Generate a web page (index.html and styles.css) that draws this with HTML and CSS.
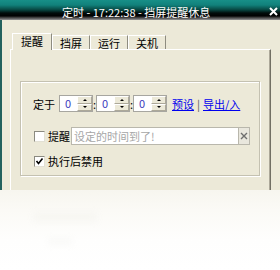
FILE: index.html
```html
<!DOCTYPE html>
<html>
<head>
<meta charset="utf-8">
<link rel="stylesheet" href="styles.css">
</head>
<body>
<div class="win">
  <div class="titlebar">
    <span class="title">定时 - 17:22:38 - 挡屏提醒休息</span>
    <svg class="close" width="9" height="9" viewBox="0 0 9 9"><path d="M1 1L8 8M8 1L1 8" stroke="#fff" stroke-width="2"/></svg>
  </div>
  <div class="frame">
    <div class="tabs">
      <div class="tab sel">提醒</div>
      <div class="tab">挡屏</div>
      <div class="tab">运行</div>
      <div class="tab">关机</div>
    </div>
    <div class="panel">
      <div class="group">
        <div class="row r1">
          <span class="lbl">定于</span>
          <div class="spin"><span class="val">0</span><span class="btns"><span class="half"><i class="up"></i></span><span class="half"><i class="dn"></i></span></span></div>
          <span class="colon">:</span>
          <div class="spin"><span class="val">0</span><span class="btns"><span class="half"><i class="up"></i></span><span class="half"><i class="dn"></i></span></span></div>
          <span class="colon">:</span>
          <div class="spin"><span class="val">0</span><span class="btns"><span class="half"><i class="up"></i></span><span class="half"><i class="dn"></i></span></span></div>
          <a class="link first">预设</a><span class="sep">|</span><a class="link">导出/入</a>
        </div>
        <div class="row r2">
          <span class="cb"></span>
          <span class="lbl cbl">提醒</span>
          <div class="input"><span class="ph">设定的时间到了!</span></div>
          <span class="xbtn"><svg width="8" height="8" viewBox="0 0 8 8"><path d="M1 1L7 7M7 1L1 7" stroke="#6e6e6e" stroke-width="1.4"/></svg></span>
        </div>
        <div class="row r3">
          <span class="cb"><svg width="9" height="9" viewBox="0 0 9 9"><path d="M1.5 4L3.5 6.5L7.5 1.5" fill="none" stroke="#000" stroke-width="1.6"/></svg></span>
          <span class="lbl cbl">执行后禁用</span>
        </div>
      </div>
    </div>
  </div>
  <div class="fade">
    <div class="ghost g1"></div>
    <div class="ghost g2"></div>
  </div>
</div>
</body>
</html>
```
FILE: styles.css
```css
* { box-sizing: border-box; margin: 0; padding: 0; }
body {
  width: 280px; height: 270px; overflow: hidden; background: #fff;
  font-family: "Noto Sans CJK SC", "Noto Sans", sans-serif; font-size: 11px; color: #000;
}
.win { width: 280px; height: 270px; display: flex; flex-direction: column; }
.titlebar {
  height: 20px; flex: none; display: flex; align-items: flex-start;
  padding-left: 62px; color: #fff;
  background: linear-gradient(to bottom, #178f88 0px, #11817b 5px, #07443f 10px, #010c0b 13px, #000 16px, #2e2e2e 17px, #6f6f6f 19px, #9a9a9a 20px);
}
.title { line-height: 12px; padding-top: 6px; white-space: nowrap; }
.close { margin-left: auto; margin-right: 2px; margin-top: 7px; }
.frame {
  height: 170px; flex: none; background: #ece9d8;
  border-left: 2px solid #22615d;
  padding: 13px 9px 0 8px; overflow: hidden;
}
.tabs { display: flex; align-items: flex-end; height: 16px; margin-left: 2px; position: relative; z-index: 1; }
.tab {
  height: 14px; padding: 0 7px; line-height: 12px; padding-top: 1px;
  border-top: 1px solid #fff; border-left: 1px solid #fff; border-right: 1px solid #8e8c80;
  background: #ece9d8; white-space: nowrap;
}
.tab.sel { height: 17px; margin-bottom: -1px; padding: 1px 8px 0 8px; }
.panel {
  height: 150px; border-top: 1px solid #fff; border-left: 1px solid #fff;
  border-right: 1px solid #716f64; box-shadow: inset -1px 0 #aca899;
  padding: 31px 0 0 9px;
}
.group {
  width: 240px; height: 95px; border: 1px solid #c4c1b1;
  box-shadow: 1px 1px 0 #fff, inset 1px 1px 0 #fff;
  padding: 13px 0 0 12px;
}
.row { display: flex; align-items: center; }
.lbl { line-height: 12px; white-space: nowrap; }
.r1 { height: 17px; }
.r1 .lbl { margin-right: 4px; }
.spin { width: 34px; height: 17px; display: flex; border: 1px solid #a7a6a0; background: #fff; }
.val { flex: 1; color: #3b3bbd; line-height: 15px; padding-left: 5px; }
.btns { width: 15px; display: flex; flex-direction: column; background: #ece9d8; }
.half {
  flex: 1; display: flex; align-items: center; justify-content: center;
  border-top: 1px solid #fff; border-left: 1px solid #fff;
  border-right: 1px solid #aca899; border-bottom: 1px solid #aca899;
}
.up { width: 0; height: 0; border-left: 2px solid transparent; border-right: 2px solid transparent; border-bottom: 2px solid #000; }
.dn { width: 0; height: 0; border-left: 2px solid transparent; border-right: 2px solid transparent; border-top: 2px solid #000; }
.colon { width: 3px; text-align: center; line-height: 12px; }
.link { color: #0000ee; text-decoration: underline; line-height: 12px; cursor: pointer; }
.link.first { margin-left: 5px; }
.sep { color: #555; margin: 0 3px; line-height: 12px; }
.r2 { height: 18px; margin-top: 15px; }
.cb {
  width: 11px; height: 11px; margin-left: 1px; background: #fff; flex: none;
  border-top: 1px solid #8b8a80; border-left: 1px solid #8b8a80;
  border-right: 1px solid #e2e0d4; border-bottom: 1px solid #e2e0d4;
  display: flex; align-items: center; justify-content: center;
}
.cbl { margin-left: 3px; }
.input {
  width: 167px; height: 18px; margin-left: 1px; background: #fff;
  border: 1px solid #b9b7ac; border-right: none; padding-left: 2px;
  display: flex; align-items: center;
}
.ph { color: #a6a6a6; line-height: 12px; white-space: nowrap; }
.xbtn {
  width: 12px; height: 18px; background: #e9e7dd; border: 1px solid #b9b7ac;
  display: flex; align-items: center; justify-content: center;
}
.r3 { height: 16px; margin-top: 8px; }
.fade {
  flex: 1;
  background: linear-gradient(to bottom, #f7f6ef 0px, #fbfaf6 20px, #fefefd 50px, #fff 80px);
  padding: 22px 0 0 33px;
}
.ghost { background: #d8d8d0; filter: blur(3px); opacity: 0.12; }
.g1 { width: 64px; height: 10px; }
.g2 { width: 24px; height: 7px; margin: 16px 0 0 15px; }
```
